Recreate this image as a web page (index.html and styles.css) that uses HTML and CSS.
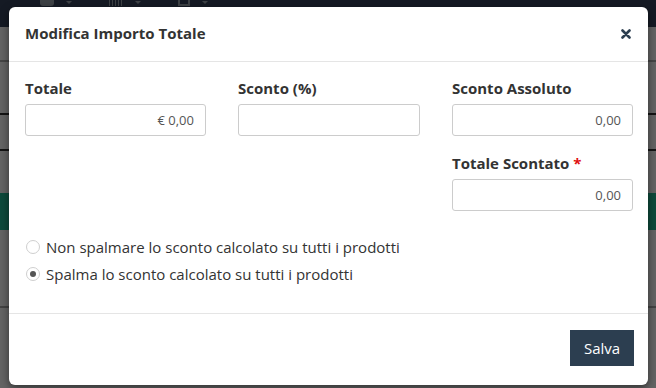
FILE: index.html
```html
<!DOCTYPE html>
<html lang="it">
<head>
<meta charset="utf-8">
<title>Modifica Importo Totale</title>
<link rel="stylesheet" href="styles.css">
</head>
<body>
<div class="page">
  <div class="navbar">
    <span class="nav-ico truck"></span><span class="caret"></span>
    <span class="nav-ico barcode"></span><span class="caret"></span>
    <span class="nav-ico copy"></span><span class="caret"></span>
  </div>
  <div class="page-body">
    <div class="strip">
      <div class="seg seg-a"></div>
      <div class="seg seg-b"></div>
      <div class="seg seg-c"></div>
      <div class="seg seg-green"></div>
      <div class="seg seg-d"></div>
    </div>
  </div>
</div>

<div class="backdrop"></div>

<div class="modal">
  <div class="modal-header">
    <h4 class="modal-title">Modifica Importo Totale</h4>
    <button class="close" type="button" aria-label="Chiudi">
      <svg width="10" height="10" viewBox="0 0 10 10"><path d="M1.5 1.5 L8.5 8.5 M8.5 1.5 L1.5 8.5" stroke="#2c3e50" stroke-width="2.6" stroke-linecap="round"/></svg>
    </button>
  </div>
  <div class="modal-body">
    <div class="grid">
      <div class="group">
        <label class="lbl">Totale</label>
        <div class="input">€ 0,00</div>
      </div>
      <div class="group">
        <label class="lbl">Sconto (%)</label>
        <div class="input"></div>
      </div>
      <div class="group">
        <label class="lbl">Sconto Assoluto</label>
        <div class="input">0,00</div>
      </div>
      <div class="group col3">
        <label class="lbl">Totale Scontato <span class="req">*</span></label>
        <div class="input">0,00</div>
      </div>
    </div>
    <div class="radios">
      <label class="radio"><span class="circle"></span>Non spalmare lo sconto calcolato su tutti i prodotti</label>
      <label class="radio"><span class="circle checked"></span>Spalma lo sconto calcolato su tutti i prodotti</label>
    </div>
  </div>
  <div class="modal-footer">
    <button class="btn" type="button">Salva</button>
  </div>
</div>
</body>
</html>
```
FILE: styles.css
```css
* { box-sizing: border-box; }
html, body { margin: 0; padding: 0; }
body {
  width: 656px;
  height: 388px;
  overflow: hidden;
  font-family: "Open Sans", "Liberation Sans", sans-serif;
  background: #ffffff;
  position: relative;
}
.page { height: 388px; display: flex; flex-direction: column; }
.navbar {
  height: 27px;
  background: #35435a;
  display: flex;
  align-items: flex-start;
  padding-left: 40px;
}
.nav-ico { display: block; height: 6px; background: #9aa3ad; }
.truck { width: 14px; border-radius: 0 0 3px 3px; }
.barcode { width: 14px; margin-left: 37px; background: repeating-linear-gradient(90deg, #9aa3ad 0 1px, transparent 1px 3px); }
.copy { width: 12px; margin-left: 37px; background: transparent; border: 2px solid #9aa3ad; border-top: 0; }
.caret { width: 0; height: 0; margin: 1px 0 0 12px; border-left: 3px solid transparent; border-right: 3px solid transparent; border-top: 3px solid #9aa3ad; }
.page-body { flex: 1; background: #fbfbfb; }
.strip { display: flex; flex-direction: column; height: 100%; }
.seg { border-bottom: 2px solid #333; flex-shrink: 0; }
.seg-a { height: 35px; border-color: #b0b0b0; }
.seg-b { height: 53px; }
.seg-c { height: 36px; }
.seg-green { height: 37px; background: #22b893; border: 0; margin-top: 42px; }
.seg-d { height: 78px; border-color: #aaa; }

.backdrop {
  position: absolute;
  inset: 0;
  background: rgba(0, 0, 0, 0.6);
}

.modal {
  position: absolute;
  left: 9px;
  top: 7px;
  width: 639px;
  height: 378px;
  background: #fff;
  border-radius: 6px;
  box-shadow: 0 3px 9px rgba(0,0,0,0.5);
  display: flex;
  flex-direction: column;
}
.modal-header {
  height: 55px;
  padding: 0 16px;
  border-bottom: 1px solid #e5e5e5;
  display: flex;
  align-items: center;
  justify-content: space-between;
}
.modal-title {
  margin: 0;
  font-size: 15px;
  font-weight: 700;
  color: #333;
  line-height: 20px;
  padding-bottom: 2px;
}
.close {
  border: 0;
  background: none;
  padding: 0;
  margin: 0 1px 0 0;
  width: 10px;
  height: 10px;
  display: flex;
}
.modal-body {
  flex: 1;
  padding: 16px 16px 0;
}
.grid {
  display: grid;
  grid-template-columns: 181px 182px 181px;
  column-gap: 32px;
  row-gap: 17px;
}
.col3 { grid-column: 3; }
.lbl {
  display: block;
  font-size: 15px;
  font-weight: 700;
  color: #333;
  line-height: 20px;
  margin-bottom: 6px;
}
.req { color: #e01010; }
.input {
  height: 32px;
  border: 1px solid #ccc;
  border-radius: 3px;
  font-size: 13px;
  color: #555;
  text-align: right;
  padding: 0 11px;
  line-height: 30px;
}
.radios { margin-top: 26px; display: flex; flex-direction: column; gap: 7px; }
.radio {
  display: flex;
  align-items: center;
  font-size: 15px;
  color: #333;
  line-height: 20px;
}
.circle {
  width: 14px;
  height: 14px;
  border: 1px solid #cfcfcf;
  border-radius: 50%;
  margin: 0 6px 0 1px;
  background: #fff;
  position: relative;
  flex-shrink: 0;
}
.circle.checked::after {
  content: "";
  position: absolute;
  left: 3px;
  top: 3px;
  width: 6px;
  height: 6px;
  border-radius: 50%;
  background: #555;
}
.modal-footer {
  height: 72px;
  border-top: 1px solid #e5e5e5;
  display: flex;
  justify-content: flex-end;
  align-items: flex-start;
  padding: 16px 14px 0 16px;
}
.btn {
  width: 64px;
  height: 36px;
  border: 0;
  border-radius: 0;
  background: #2c3e50;
  color: #fff;
  font-family: "Open Sans", "Liberation Sans", sans-serif;
  font-size: 15px;
  padding: 0;
}
```
